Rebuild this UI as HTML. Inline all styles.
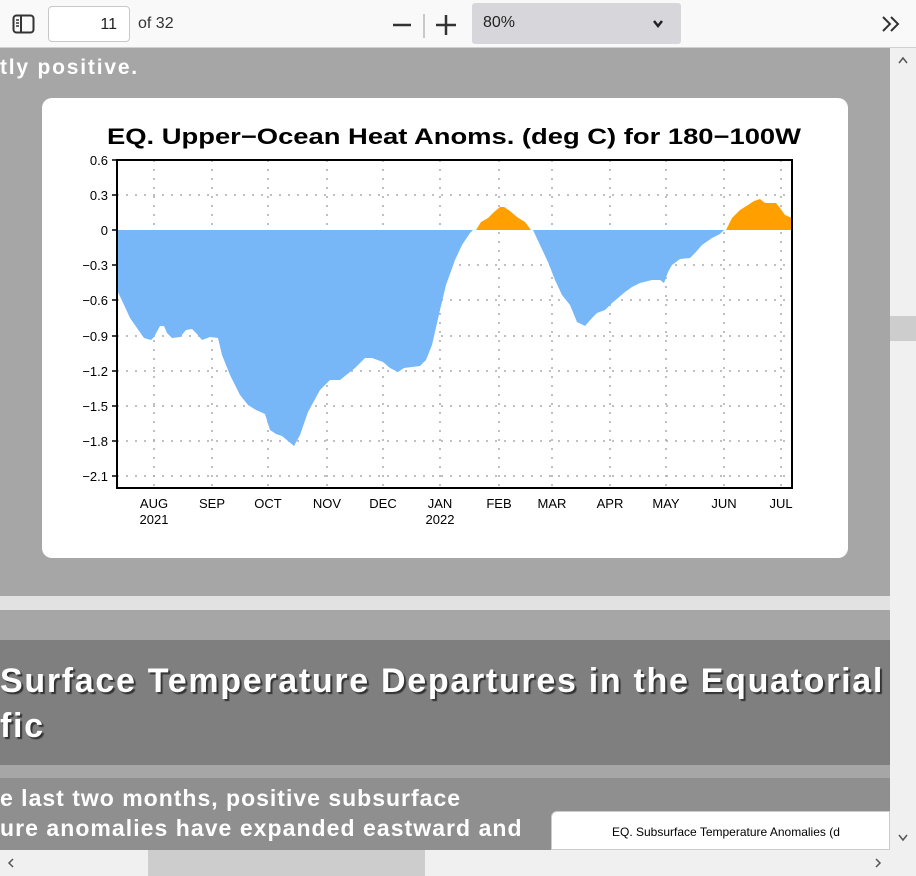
<!DOCTYPE html>
<html><head><meta charset="utf-8"><style>
*{margin:0;padding:0;box-sizing:border-box}
body{width:916px;height:876px;overflow:hidden;position:relative;background:#a6a6a6;font-family:"Liberation Sans",sans-serif}
.tb{position:absolute;left:0;top:0;width:916px;height:48px;background:#f9f9fa;border-bottom:1px solid #d0d0d0}
.pg{position:absolute;left:48px;top:6px;width:82px;height:36px;border:1px solid #c8c8c8;border-radius:4px;background:#fff;font-size:16px;text-align:right;padding:9px 12px 0 0;color:#222}
.of{position:absolute;left:138px;top:15px;font-size:16px;color:#333}
.zoom{position:absolute;left:472px;top:3px;width:209px;height:41px;background:#d7d7db;border-radius:3px;font-size:16px;color:#222;padding:11px 0 0 11px}
.t{position:absolute;color:#fff;font-weight:bold;white-space:nowrap}
.vs{position:absolute;left:890px;top:48px;width:26px;height:802px;background:#f0f0f0}
.hs{position:absolute;left:0;top:850px;width:916px;height:26px;background:#f0f0f0}
</style></head><body>
<div class="tb">
 <svg style="position:absolute;left:12px;top:14px" width="24" height="20" viewBox="0 0 24 20"><rect x="1.5" y="1.5" width="20" height="17" rx="3" fill="none" stroke="#333" stroke-width="2"/><line x1="9" y1="2" x2="9" y2="18" stroke="#333" stroke-width="2"/><line x1="4" y1="6" x2="7" y2="6" stroke="#333" stroke-width="1.5"/><line x1="4" y1="9" x2="7" y2="9" stroke="#333" stroke-width="1.5"/><line x1="4" y1="12" x2="7" y2="12" stroke="#333" stroke-width="1.5"/></svg>
 <div class="pg">11</div><div class="of">of 32</div>
 <svg style="position:absolute;left:390px;top:10px" width="75" height="30"><line x1="3" y1="15" x2="21" y2="15" stroke="#333" stroke-width="2.5"/><line x1="34" y1="4" x2="34" y2="28" stroke="#999" stroke-width="1"/><line x1="46" y1="15" x2="66" y2="15" stroke="#333" stroke-width="2.5"/><line x1="56" y1="5" x2="56" y2="25" stroke="#333" stroke-width="2.5"/></svg>
 <div class="zoom">80%</div>
 <svg style="position:absolute;left:652px;top:19px" width="12" height="10"><path d="M2 2 L6 7 L10 2" fill="none" stroke="#222" stroke-width="2.5"/></svg>
 <svg style="position:absolute;left:880px;top:14px" width="24" height="20"><path d="M3 3 L10 10 L3 17 M11 3 L18 10 L11 17" fill="none" stroke="#333" stroke-width="2"/></svg>
</div>
<div class="t" style="left:0;top:56px;font-size:21px;letter-spacing:1.8px">tly positive.</div>
<div style="position:absolute;left:42px;top:98px;width:806px;height:460px;background:#fff;border-radius:10px"></div>
<svg style="position:absolute;left:0;top:0" width="916" height="876">
<text x="107" y="144" font-family="Liberation Sans,sans-serif" font-size="22" font-weight="bold" textLength="694" lengthAdjust="spacingAndGlyphs" fill="#000">EQ. Upper−Ocean Heat Anoms. (deg C) for 180−100W</text>
<g stroke="#aaa" stroke-width="1.5" stroke-dasharray="2,7">
<line x1="117" y1="195" x2="792" y2="195"/><line x1="117" y1="265" x2="792" y2="265"/><line x1="117" y1="300" x2="792" y2="300"/><line x1="117" y1="336" x2="792" y2="336"/><line x1="117" y1="371" x2="792" y2="371"/><line x1="117" y1="406" x2="792" y2="406"/><line x1="117" y1="441" x2="792" y2="441"/><line x1="117" y1="476" x2="792" y2="476"/>
<line x1="154" y1="160" x2="154" y2="488"/><line x1="212" y1="160" x2="212" y2="488"/><line x1="268" y1="160" x2="268" y2="488"/><line x1="327" y1="160" x2="327" y2="488"/><line x1="383" y1="160" x2="383" y2="488"/><line x1="440" y1="160" x2="440" y2="488"/><line x1="499" y1="160" x2="499" y2="488"/><line x1="552" y1="160" x2="552" y2="488"/><line x1="610" y1="160" x2="610" y2="488"/><line x1="666" y1="160" x2="666" y2="488"/><line x1="724" y1="160" x2="724" y2="488"/><line x1="781" y1="160" x2="781" y2="488"/>
</g>
<polygon fill="#77b7f7" points="117,230 117,290 125,307 130,318 137,328 144,338 151,340 154,337 160,326 164,326 167,333 172,338 180,337 186,330 192,329 197,334 202,340 210,337 218,338 222,355 230,375 240,395 248,405 256,410 265,414 270,430 276,434 282,436 294,446 300,435 308,412 320,390 330,380 340,380 355,368 365,358 372,358 383,362 390,368 398,372 404,368 412,367 420,366 426,360 432,345 440,310 446,285 455,260 462,245 470,233 473,230"/>
<polygon fill="#77b7f7" points="533,230 540,245 548,262 555,280 562,295 570,305 577,322 585,326 592,318 597,313 605,310 612,303 618,298 625,292 632,287 640,283 652,280 660,280 664,283 668,272 672,265 680,259 690,258 695,253 702,245 712,238 720,234 724,230"/>
<polygon fill="#ffa000" points="476,230 481,222 488,218 494,212 500,207 504,207 510,211 517,217 525,222 531,230"/>
<polygon fill="#ffa000" points="726,230 732,218 740,210 748,205 754,201 760,199 765,203 770,203 776,203 780,208 785,215 792,218 792,230"/>
<line x1="117" y1="160" x2="792" y2="160" stroke="#000" stroke-width="2" stroke-dasharray="4,2"/>
<rect x="117" y="160" width="675" height="328" fill="none" stroke="#000" stroke-width="2"/>
<g stroke="#000" stroke-width="1.5">
<line x1="112" y1="160" x2="117" y2="160"/><line x1="112" y1="195" x2="117" y2="195"/><line x1="112" y1="230" x2="117" y2="230"/><line x1="112" y1="265" x2="117" y2="265"/><line x1="112" y1="300" x2="117" y2="300"/><line x1="112" y1="336" x2="117" y2="336"/><line x1="112" y1="371" x2="117" y2="371"/><line x1="112" y1="406" x2="117" y2="406"/><line x1="112" y1="441" x2="117" y2="441"/><line x1="112" y1="476" x2="117" y2="476"/>
</g>
<g font-family="Liberation Sans,sans-serif" font-size="13" fill="#000" text-anchor="end">
<text x="108" y="165">0.6</text><text x="108" y="200">0.3</text><text x="108" y="235">0</text><text x="108" y="270">−0.3</text><text x="108" y="305">−0.6</text><text x="108" y="341">−0.9</text><text x="108" y="376">−1.2</text><text x="108" y="411">−1.5</text><text x="108" y="446">−1.8</text><text x="108" y="481">−2.1</text>
</g>
<g font-family="Liberation Sans,sans-serif" font-size="13" fill="#000" text-anchor="middle">
<text x="154" y="508">AUG</text><text x="154" y="524">2021</text><text x="212" y="508">SEP</text><text x="268" y="508">OCT</text><text x="327" y="508">NOV</text><text x="383" y="508">DEC</text><text x="440" y="508">JAN</text><text x="440" y="524">2022</text><text x="499" y="508">FEB</text><text x="552" y="508">MAR</text><text x="610" y="508">APR</text><text x="666" y="508">MAY</text><text x="724" y="508">JUN</text><text x="781" y="508">JUL</text>
</g>
</svg>
<div style="position:absolute;left:0;top:596px;width:890px;height:14px;background:#e2e2e2"></div>
<div style="position:absolute;left:0;top:640px;width:890px;height:125px;background:#7f7f7f"></div>
<div style="position:absolute;left:0;top:778px;width:890px;height:72px;background:#8f8f8f"></div>
<div class="t" style="left:0;top:662px;font-size:34px;letter-spacing:1.7px;text-shadow:2px 2px 1px #333">Surface Temperature Departures in the Equatorial</div>
<div class="t" style="left:0;top:707px;font-size:34px;letter-spacing:1.7px;text-shadow:2px 2px 1px #333">fic</div>
<div class="t" style="left:0;top:785px;font-size:23px;letter-spacing:1px">e last two months, positive subsurface</div>
<div class="t" style="left:0;top:815px;font-size:23px;letter-spacing:1.05px">ure anomalies have expanded eastward and</div>
<div style="position:absolute;left:551px;top:811px;width:339px;height:39px;background:#fff;border-radius:6px 0 0 0;border:1px solid #ccc"></div>
<div style="position:absolute;left:612px;top:825px;font-size:12px;color:#000;white-space:nowrap">EQ. Subsurface Temperature Anomalies (d</div>
<div class="vs"><div style="position:absolute;left:0;top:268px;width:26px;height:25px;background:#cdcdcd"></div>
<svg style="position:absolute;left:7px;top:8px" width="12" height="10"><path d="M2 7 L6 2 L10 7" fill="none" stroke="#555" stroke-width="1.5"/></svg>
<svg style="position:absolute;left:7px;top:785px" width="12" height="10"><path d="M2 2 L6 7 L10 2" fill="none" stroke="#555" stroke-width="1.5"/></svg></div>
<div class="hs"><div style="position:absolute;left:148px;top:0;width:277px;height:26px;background:#cdcdcd"></div>
<svg style="position:absolute;left:6px;top:7px" width="10" height="12"><path d="M7 2 L3 6 L7 10" fill="none" stroke="#555" stroke-width="1.5"/></svg>
<svg style="position:absolute;left:873px;top:7px" width="10" height="12"><path d="M3 2 L7 6 L3 10" fill="none" stroke="#555" stroke-width="1.5"/></svg></div>
</body></html>
